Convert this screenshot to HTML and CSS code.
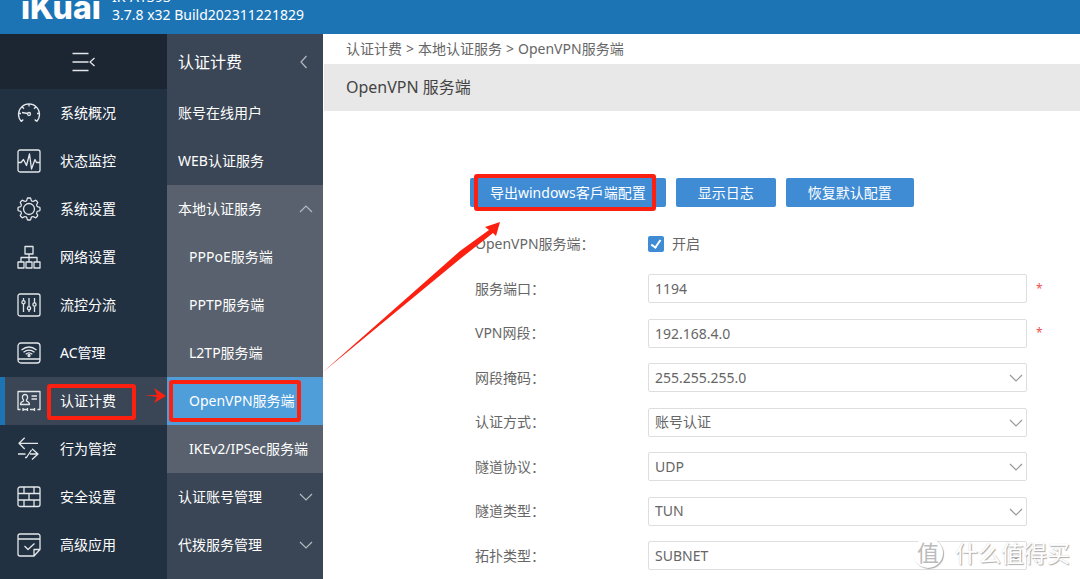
FILE: index.html
```html
<!DOCTYPE html>
<html lang="zh-CN">
<head>
<meta charset="utf-8">
<meta name="viewport" content="width=device-width, initial-scale=1">
<title>OpenVPN 服务端</title>
<link rel="stylesheet" href="styles.css">
</head>
<body>
<header class="topbar">
  <div class="logo">iKuai</div>
  <div class="version"><div>IK-A1393</div><div>3.7.8 x32 Build202311221829</div></div>
</header>
<div class="layout">
  <nav class="sidebar" aria-label="主菜单">
    <button class="collapse" type="button" aria-label="收起菜单">
      <svg class="icon" viewBox="0 0 24 24"><path d="M0.500 3.500h16M0.500 12h16M0.500 20.500h16M22.500 8l-4.500 4 4.500 4"/></svg>
    </button>
    <a class="nav-item" href="#"><svg class="icon" viewBox="0 0 24 24"><path d="M4.300 20.500A10.500 10.500 0 1 1 19.700 20.500M4.300 20.500l2-2M19.700 20.500l-2-2M12 2.500v3M5 5.800l2 2M19 5.800l-2 2M1.500 12.500h2.500M20 12.500h2.500M5 11.500l5.500 1"/><circle cx="12" cy="13" r="1.500"/></svg>系统概况</a>
    <a class="nav-item" href="#"><svg class="icon" viewBox="0 0 24 24"><rect x="1" y="1" width="22" height="22" rx="2"/><path d="M1 13.500h3l2.500-3 3 6 3-11.500 2 15 3.500-9.500 1.500 3h3.500"/></svg>状态监控</a>
    <a class="nav-item" href="#"><svg class="icon" viewBox="0 0 24 24"><circle cx="12" cy="12" r="5.500"/><path id="tooth" d="M8.800 4.300Q10 3.800 10.200 1.800Q10.300 1 11 1h2Q13.700 1 13.800 1.800Q14 3.800 15.200 4.300"/><use href="#tooth" transform="rotate(45 12 12)"/><use href="#tooth" transform="rotate(90 12 12)"/><use href="#tooth" transform="rotate(135 12 12)"/><use href="#tooth" transform="rotate(180 12 12)"/><use href="#tooth" transform="rotate(225 12 12)"/><use href="#tooth" transform="rotate(270 12 12)"/><use href="#tooth" transform="rotate(315 12 12)"/></svg>系统设置</a>
    <a class="nav-item" href="#"><svg class="icon" viewBox="0 0 24 24"><path d="M8 1.500h8v7.500H8zM1 17h6v6H1zM9 17h6v6H9zM17 17h6v6h-6zM12 9v8M4 17v-4.500h16V17"/></svg>网络设置</a>
    <a class="nav-item" href="#"><svg class="icon" viewBox="0 0 24 24"><rect x="1" y="1" width="22" height="22" rx="2"/><path d="M6.500 5v2.500M6.500 11v8M12 5v8.500M12 17v2M17.500 5v5M17.500 13.500v5.500"/><circle cx="6.500" cy="9.300" r="1.600"/><circle cx="12" cy="15.300" r="1.600"/><circle cx="17.500" cy="11.500" r="1.600"/></svg>流控分流</a>
    <a class="nav-item" href="#"><svg class="icon" viewBox="0 0 24 24"><rect x="1" y="2" width="22" height="20" rx="3"/><path d="M1 18h22M4.500 9q7.500-6 15 0M6.500 11.300q5.500-4.500 11 0M8.700 13.300q3.300-2.700 6.600 0"/><circle cx="12" cy="14.500" r="1"/></svg>AC管理</a>
    <a class="nav-item active" href="#" aria-current="true"><svg class="icon" viewBox="0 0 24 24"><path d="M3.500 20.500H1V2.500h22v18h-2.500M6 20.500h4.500M13 20.500h4.500M6 19v3M10.500 19v3M17.500 19v3M14.500 7h5.500M14.500 10h5.500M3.500 15.500c0-2.500 1.500-3 3-3.500v-1c-2.500-3-.5-5.500 1.500-5.500s4 2.500 1.500 5.500v1c1.500.5 3 1 3 3.500z"/></svg>认证计费</a>
    <a class="nav-item" href="#"><svg class="icon" viewBox="0 0 24 24"><path d="M21 6.300H2M7.700.8L2 6.300 7.700 12M1 17h7.500M8 20.500h1.500L14.500 13M13 17h8M15 11.700l6 5.300-6 5.500"/></svg>行为管控</a>
    <a class="nav-item" href="#"><svg class="icon" viewBox="0 0 24 24"><rect x="1" y="2" width="22" height="19.500" rx="2"/><path d="M1 8.500h22M1 15h22M7 2v6.500M17 2v6.500M12 8.500v6.500M7 15v6.500M17 15v6.500"/></svg>安全设置</a>
    <a class="nav-item" href="#"><svg class="icon" viewBox="0 0 24 24"><path d="M23 16V3a2 2 0 0 0-2-2H3a2 2 0 0 0-2 2v18a2 2 0 0 0 2 2h14l6-6.500h-6V23M1 6h22M7.500 13l3.500 3.500 6.500-6"/></svg>高级应用</a>
  </nav>
  <nav class="submenu" aria-label="认证计费">
    <div class="submenu-title">认证计费<svg class="chevron" viewBox="0 0 14 14"><path d="M9.500 1L4 7l5.500 6"/></svg></div>
    <a class="sub-item" href="#">账号在线用户</a>
    <a class="sub-item" href="#">WEB认证服务</a>
    <div class="sub-group">
      <a class="sub-item" href="#">本地认证服务<svg class="chevron" viewBox="0 0 14 14"><path d="M1 10l6-6 6 6"/></svg></a>
      <a class="sub-item child" href="#">PPPoE服务端</a>
      <a class="sub-item child" href="#">PPTP服务端</a>
      <a class="sub-item child" href="#">L2TP服务端</a>
      <a class="sub-item child current" href="#" aria-current="page">OpenVPN服务端</a>
      <a class="sub-item child" href="#">IKEv2/IPSec服务端</a>
    </div>
    <a class="sub-item" href="#">认证账号管理<svg class="chevron" viewBox="0 0 14 14"><path d="M1 4l6 6 6-6"/></svg></a>
    <a class="sub-item" href="#">代拨服务管理<svg class="chevron" viewBox="0 0 14 14"><path d="M1 4l6 6 6-6"/></svg></a>
  </nav>
  <main class="main">
    <div class="breadcrumb"><span>认证计费</span><span>&gt;</span><span>本地认证服务</span><span>&gt;</span><span>OpenVPN服务端</span></div>
    <h1 class="page-title">OpenVPN 服务端</h1>
    <div class="actions">
      <button class="btn wide" type="button">导出windows客戶端配置</button>
      <button class="btn" type="button">显示日志</button>
      <button class="btn" type="button">恢复默认配置</button>
    </div>
    <form class="form">
      <div class="row"><label for="enable">OpenVPN服务端：</label><div class="check"><input id="enable" type="checkbox" checked><label for="enable">开启</label></div></div>
      <div class="row"><label for="port">服务端口：</label><input class="field" id="port" type="text" value="1194"><span class="required">*</span></div>
      <div class="row"><label for="net">VPN网段：</label><input class="field" id="net" type="text" value="192.168.4.0"><span class="required">*</span></div>
      <div class="row"><label for="mask">网段掩码：</label><div class="select"><select class="field" id="mask"><option>255.255.255.0</option></select><svg class="chevron" viewBox="0 0 14 14"><path d="M1 4l6 6 6-6"/></svg></div></div>
      <div class="row"><label for="auth">认证方式：</label><div class="select"><select class="field" id="auth"><option>账号认证</option></select><svg class="chevron" viewBox="0 0 14 14"><path d="M1 4l6 6 6-6"/></svg></div></div>
      <div class="row"><label for="proto">隧道协议：</label><div class="select"><select class="field" id="proto"><option>UDP</option></select><svg class="chevron" viewBox="0 0 14 14"><path d="M1 4l6 6 6-6"/></svg></div></div>
      <div class="row"><label for="type">隧道类型：</label><div class="select"><select class="field" id="type"><option>TUN</option></select><svg class="chevron" viewBox="0 0 14 14"><path d="M1 4l6 6 6-6"/></svg></div></div>
      <div class="row"><label for="topo">拓扑类型：</label><div class="select"><select class="field" id="topo"><option>SUBNET</option></select><svg class="chevron" viewBox="0 0 14 14"><path d="M1 4l6 6 6-6"/></svg></div></div>
    </form>
  </main>
</div>
<svg class="annotations" width="1080" height="579" viewBox="0 0 1080 579" aria-hidden="true">
  <rect x="49" y="386" width="85" height="32" rx="1"/>
  <rect x="171" y="382" width="128" height="38" rx="1"/>
  <rect x="476" y="176" width="178" height="33" rx="1"/>
  <path d="M145 395l12 0-3-7 12 8-12 7 3-6z"/>
  <path d="M323 372L460 251 489 230 485 227 500 222 496 236 493 233 460 259z"/>
</svg>
<div class="watermark"><span class="seal">值</span><span>什么值得买</span></div>
</body>
</html>
```

FILE: styles.css
```css
* { box-sizing: border-box; }

body {
  margin: 0;
  height: 100vh;
  overflow: hidden;
  display: flex;
  flex-direction: column;
  position: relative;
  font: 14px/20px "Noto Sans", "Noto Sans CJK SC", sans-serif;
  color: #666;
  background: #fff;
}

a { color: inherit; text-decoration: none; }
button, input, select { font: inherit; }

.topbar {
  flex: none;
  height: 34px;
  display: flex;
  align-items: flex-end;
  gap: 15px;
  padding: 0 21px 10px;
  overflow: hidden;
  color: #fff;
  background: #1c74b5;
}

.logo {
  width: 76px;
  font: 800 32px/32px Inter, sans-serif;
}

.version { line-height: 18px; }

.layout { flex: 1; display: flex; min-height: 0; }

.sidebar {
  flex: none;
  width: 167px;
  color: #fff;
  background: #223142;
}

.collapse {
  display: flex;
  align-items: center;
  justify-content: center;
  width: 100%;
  height: 55px;
  padding: 0;
  border: 0;
  color: #fff;
  background: #1b2632;
}

.icon {
  flex: none;
  width: 24px;
  height: 24px;
  fill: none;
  stroke: #e4e7ea;
  stroke-width: 1.3;
  stroke-linejoin: round;
}

.nav-item {
  display: flex;
  align-items: center;
  gap: 19px;
  height: 48px;
  padding-left: 12px;
  border-left: 5px solid transparent;
}

.nav-item.active { border-color: #1c74b5; background: #3a4655; }

.submenu {
  flex: none;
  width: 156px;
  color: #fff;
  background: #3a4655;
}

.submenu-title, .sub-item {
  display: flex;
  align-items: center;
  justify-content: space-between;
  height: 48px;
  padding: 0 10px 0 11px;
  white-space: nowrap;
}

.submenu-title { height: 55px; padding-right: 12px; font-size: 16px; }
.sub-item.child { padding: 0 0 0 22px; }
.sub-group { background: #58616d; }
.sub-item.current { background: #4f9eda; }

.chevron {
  flex: none;
  width: 14px;
  height: 14px;
  fill: none;
  stroke: #b4bac1;
  stroke-width: 1.2;
}

.main { flex: 1; min-width: 0; padding-left: 1px; }

.breadcrumb {
  display: flex;
  align-items: center;
  gap: 4px;
  height: 30px;
  padding-left: 22px;
}

.page-title {
  margin: 0;
  padding: 11px 22px 12px;
  font-size: 16px;
  font-weight: 400;
  line-height: 24px;
  color: #444;
  background: #e8e8e8;
}

.actions {
  display: flex;
  gap: 10px;
  padding: 67px 0 15px 146px;
}

.btn {
  height: 29px;
  padding: 0 22px;
  border: 0;
  border-radius: 2px;
  color: #fff;
  background: #3f8cd5;
}
.btn.wide { padding: 0 20px; }

.form {
  display: grid;
  grid-auto-rows: 1fr;
  min-height: 356px;
  padding-left: 151px;
}

.row {
  display: grid;
  grid-template-columns: 173px minmax(0, 1fr) 53px;
  align-items: center;
}

.field {
  display: block;
  width: 100%;
  height: 29px;
  padding: 0 6px;
  border: 1px solid #dedede;
  border-radius: 2px;
  color: #666;
  background: #fff;
  appearance: none;
}

.select { position: relative; }
.select .chevron {
  position: absolute;
  top: 8px;
  right: 4px;
  stroke: #999;
  pointer-events: none;
}

.required { padding-left: 9px; font-size: 12px; color: #f05050; }

.check { display: flex; align-items: center; gap: 8px; }
.check input {
  appearance: none;
  display: flex;
  justify-content: center;
  align-items: flex-start;
  padding-top: 2px;
  width: 16px;
  height: 16px;
  margin: 0;
  border-radius: 2px;
  background: #3f8cd5;
}
.check input:checked::after {
  content: "";
  box-sizing: border-box;
  width: 6px;
  height: 10px;
  border: solid #fff;
  border-width: 0 2px 2px 0;
  transform: rotate(35deg);
}

.annotations {
  position: absolute;
  top: 0;
  left: 0;
  pointer-events: none;
}
.annotations rect { fill: none; stroke: #fb2010; stroke-width: 4; }
.annotations path { fill: #fb2010; }

.watermark {
  position: absolute;
  right: 10px;
  bottom: 10px;
  display: flex;
  align-items: center;
  gap: 12px;
  font-size: 23px;
  line-height: 32px;
  color: #fff;
  text-shadow: 1px 1px 1px #aaa, 0 0 1px #ccc;
  pointer-events: none;
}
.seal {
  width: 30px;
  height: 30px;
  border-radius: 50%;
  font-size: 22px;
  line-height: 28px;
  text-align: center;
  color: #bbb;
  background: #fff;
  box-shadow: 1px 1px 1px #aaa;
  text-shadow: none;
}
```
